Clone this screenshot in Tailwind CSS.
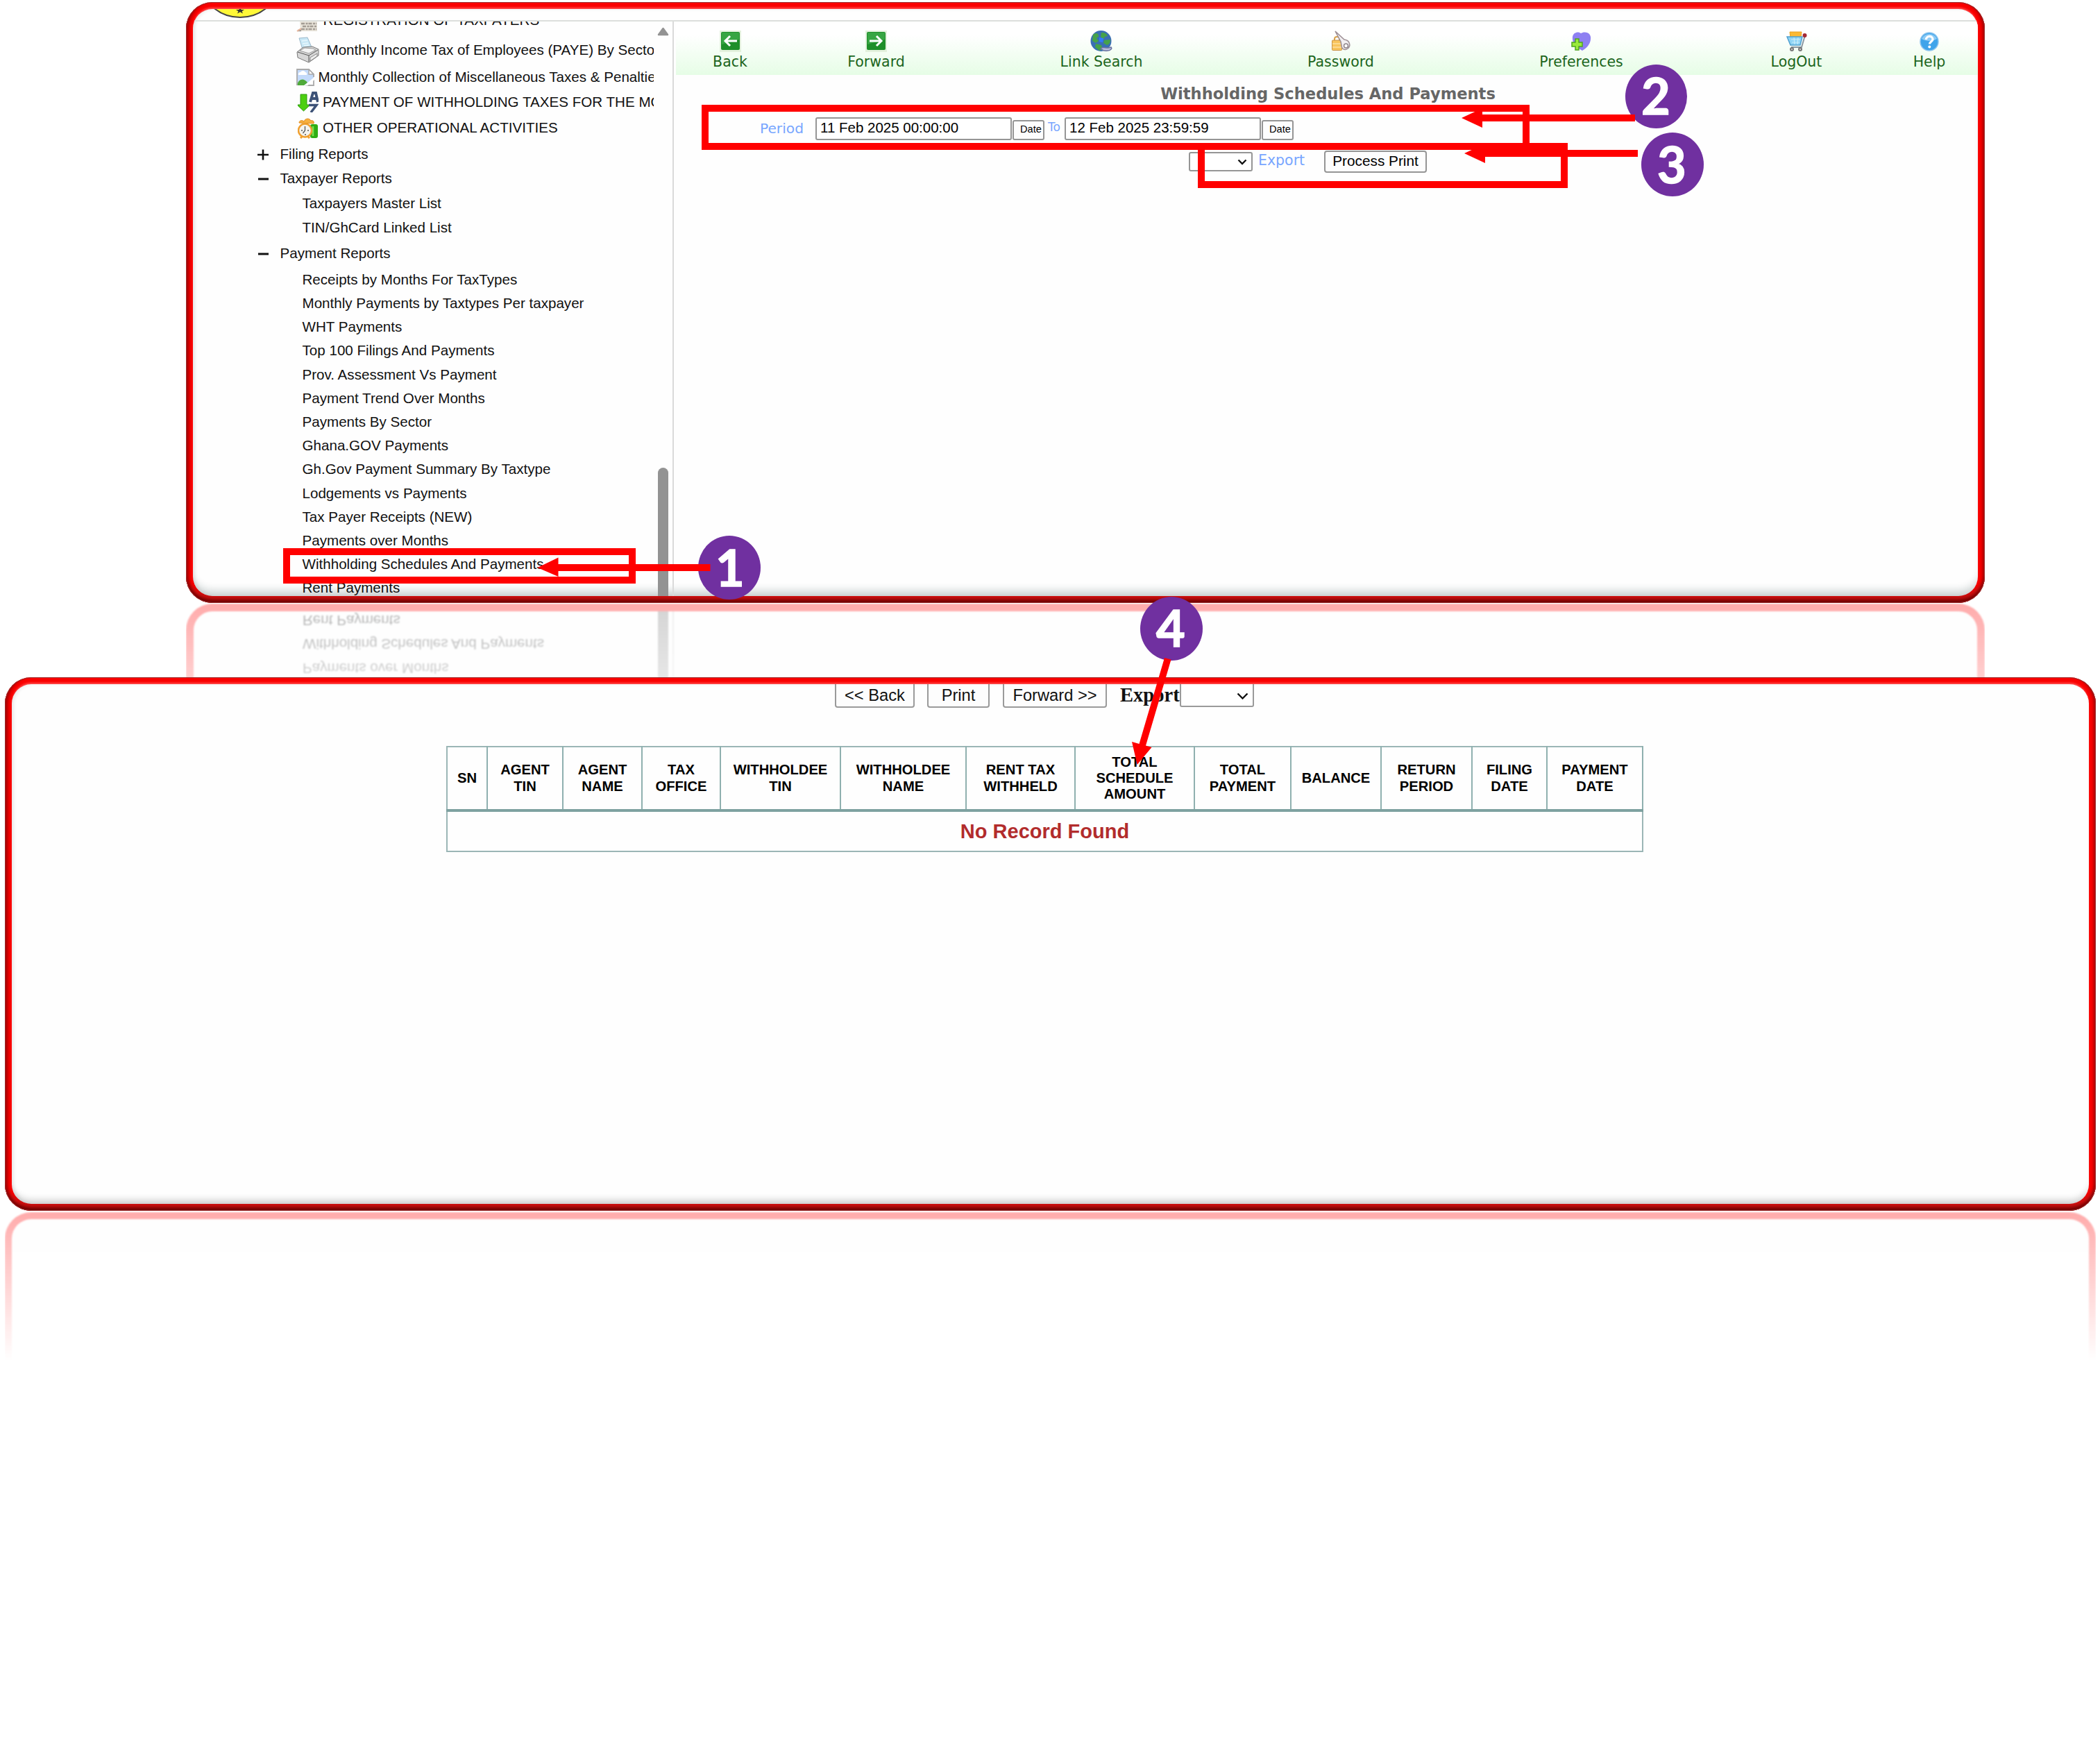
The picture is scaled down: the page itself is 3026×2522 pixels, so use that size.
<!DOCTYPE html>
<html lang="en">
<head>
<meta charset="utf-8">
<title>Withholding Schedules And Payments</title>
<script src="https://cdn.jsdelivr.net/npm/@tailwindcss/browser@4"></script>
</head>
<body class="bg-white">
<div class="relative flex h-[2522px] w-[3026px] flex-col overflow-hidden bg-white font-['Liberation_Sans',Arial,sans-serif] text-[20.6px] text-[#111]">

  <!-- Report selection panel -->
  <section class="mt-[3px] ml-[268px] h-[866px] w-[2592px] shrink-0 rounded-[38px] bg-[#fa0000] p-[10px] shadow-[inset_0_0_0_1px_#9a3030,inset_0_-9px_5px_-4px_#6d0000,inset_8px_0_4px_-4px_#a00000,inset_-7px_0_4px_-4px_#9c0000,inset_0_-18px_5px_-5px_#cc1010]">
    <div class="flex h-full flex-col overflow-hidden rounded-[28px] bg-[#fefefe] shadow-[0_-3px_3px_-1px_#ff5050,inset_0_-14px_12px_-6px_rgba(20,50,50,0.2),inset_3px_0_5px_rgba(0,0,0,0.08)]">
      <header class="flex h-[18px] shrink-0 items-start overflow-hidden border-b-2 border-[#dcdfdc]">
        <svg class="ml-[8px] h-[14px] w-[120px] shrink-0" viewBox="0 0 120 14"><circle cx="60" cy="-48" r="60" fill="#fff838" stroke="#444" stroke-width="2"/><path d="M60-3l1.6 4h4.4l-3.4 2.2L64 6.5 60 4.300l-4 2.200 1.400-3.300L54 1h4.400z" fill="#333"/></svg>
        <span class="-mt-[15px] ml-[2106px] w-[152px] text-[17px] leading-[20px] text-[#8a5a3a]">Date</span>
        <span class="-mt-[15px] text-[15px] leading-[20px] whitespace-nowrap text-[#8a5a3a]">05 Mar 2025 10:22:40</span>
      </header>
      <div class="flex min-h-0 flex-1">
        <aside class="flex w-[693px] shrink-0 overflow-hidden border-r-2 border-[#dadada]">
          <nav class="-mt-[20px] w-[664px] shrink-0 overflow-hidden whitespace-nowrap">
            <div class="flex h-[36px] items-center pl-[149px]">
              <span class="flex w-[38.600px] shrink-0"><svg class="h-[34px] w-[32px]" viewBox="0 0 32 34"><path d="M4 2h26v31H6z" fill="#e9e4da"/><path d="M7 22h22M9 26h20M7 30h22M2 32h5" stroke="#a39c94" stroke-width="2.500" stroke-dasharray="5 1.500 3 1"/><path d="M1 33l6-4" stroke="#e8b49a" stroke-width="2"/></svg></span>REGISTRATION OF TAXPAYERS
            </div>
            <div class="flex h-[50px] items-center pl-[149px]">
              <span class="flex w-[43.500px] shrink-0"><svg class="h-[38px] w-[33px]" viewBox="0 0 33 38"><path d="M4 2L16 1l6 14-13 3z" fill="#c9e8f6" stroke="#9bb9cc"/><path d="M8 6l8-1M9 10l8-1M11 13l7-1" stroke="#e6f6fc" stroke-width="1.500"/><path d="M1 22L10 15l13-1 9 4v9L18 37 2 30z" fill="#d7d7d7" stroke="#777"/><path d="M2 22l16 5 13-8M18 27v9" fill="none" stroke="#555"/><path d="M5 20l7-4 12 1 4 2-10 5z" fill="#f4f4f4" stroke="#999"/><path d="M20 30l10-6v4l-10 7z" fill="#eee" stroke="#888"/></svg></span>Monthly Income Tax of Employees (PAYE) By Sector
            </div>
            <div class="flex h-[29px] items-center pl-[149px]">
              <span class="flex w-[31.500px] shrink-0"><svg class="h-[25px] w-[26px]" viewBox="0 0 26 25"><path d="M1 1h17l7 7v7L15 24H1z" fill="#c3dafa"/><path d="M3 8a3 3 0 013-3 4 4 0 017 0 3 3 0 012 4H3z" fill="#fff"/><path d="M1 24c2-10 10-11 15-4l-5 4z" fill="#4faa3a"/><path d="M13 24h12v-9M1 24V1h17l7 7v4" fill="none" stroke="#aaa" stroke-width="1.800"/><path d="M18 1v7h7z" fill="#fff" stroke="#aaa" stroke-width="1.500"/><path d="M11 24.500L26 12v4L16 24.500z" fill="#fff"/></svg></span>Monthly Collection of Miscellaneous Taxes &amp; Penalties
            </div>
            <div class="flex h-[42px] items-center pl-[151px]">
              <span class="flex w-[36px] shrink-0"><svg class="h-[30px] w-[30px]" viewBox="0 0 30 30"><path d="M4 4h9v15h5L8.500 28-1 19h5z" fill="#4ccf10" stroke="#2f9a12"/><path d="M18 15L22 2h4l3 13M19.500 10h9" fill="none" stroke="#3d5277" stroke-width="4"/><path d="M16 19.500h11L19 30" fill="none" stroke="#3d5277" stroke-width="3.500"/></svg></span>PAYMENT OF WITHHOLDING TAXES FOR THE MONTH
            </div>
            <div class="flex h-[33px] items-center pl-[151px]">
              <span class="flex w-[36px] shrink-0"><svg class="h-[30px] w-[30px]" viewBox="0 0 30 30"><rect x="18" y="9" width="11" height="20" rx="3" fill="#2fae14"/><path d="M22 12v14" stroke="#7be04f" stroke-width="2.500"/><path d="M2 7c0-4 5-4 7-2 2-5 8-5 10-1 3-1 5 1 4 4z" fill="#f7b040" stroke="#e08a1a"/><circle cx="10.500" cy="18" r="9.500" fill="#f4f3ef" stroke="#f0a030" stroke-width="2.500"/><path d="M10.500 12v6l-3 4M5 18h2m7 0h2M10 24h2" stroke="#555" stroke-width="1.300" fill="none"/><path d="M4 29l3-3m10 3l-3-3" stroke="#f0a030" stroke-width="3"/></svg></span>OTHER OPERATIONAL ACTIVITIES
            </div>
            <div class="flex h-[43px] items-center pl-[92px]"><span class="flex w-[33.500px] shrink-0"><svg class="h-[18px] w-[18px]" viewBox="0 0 18 18"><path d="M1 9h16M9 1.500v15" stroke="#111" stroke-width="2.600"/></svg></span>Filing Reports</div>
            <div class="flex h-[26px] items-center pl-[94px]"><span class="flex w-[31.500px] shrink-0"><svg class="h-[18px] w-[16px]" viewBox="0 0 16 18"><path d="M0 10h15" stroke="#111" stroke-width="3"/></svg></span>Taxpayer Reports</div>
            <div class="flex h-[47px] items-center pl-[157.500px]">Taxpayers Master List</div>
            <div class="flex h-[22px] items-center pl-[157.500px]">TIN/GhCard Linked List</div>
            <div class="flex h-[52px] items-center pl-[94px]"><span class="flex w-[31.500px] shrink-0"><svg class="h-[18px] w-[16px]" viewBox="0 0 16 18"><path d="M0 10h15" stroke="#111" stroke-width="3"/></svg></span>Payment Reports</div>
            <div class="flex h-[24px] items-center pl-[157.500px]">Receipts by Months For TaxTypes</div>
            <ul class="mt-[5px] pl-[157.500px] leading-[34.200px]">
              <li class="h-[34.200px]">Monthly Payments by Taxtypes Per taxpayer</li>
              <li class="h-[34.200px]">WHT Payments</li>
              <li class="h-[34.200px]">Top 100 Filings And Payments</li>
              <li class="h-[34.200px]">Prov. Assessment Vs Payment</li>
              <li class="h-[34.200px]">Payment Trend Over Months</li>
              <li class="h-[34.200px]">Payments By Sector</li>
              <li class="h-[34.200px]">Ghana.GOV Payments</li>
              <li class="h-[34.200px]">Gh.Gov Payment Summary By Taxtype</li>
              <li class="h-[34.200px]">Lodgements vs Payments</li>
              <li class="h-[34.200px]">Tax Payer Receipts (NEW)</li>
              <li class="h-[34.200px]">Payments over Months</li>
              <li class="h-[34.200px]">Withholding Schedules And Payments</li>
              <li class="h-[34.200px]">Rent Payments</li>
            </ul>
          </nav>
          <!-- Scrollbar -->
          <div class="ml-[5px] flex w-[17px] flex-col pt-[8px]">
            <svg class="h-[13px] w-[17px]" viewBox="0 0 17 13"><path d="M8.500 2L15 11H2z" fill="#939393" stroke="#939393" stroke-width="2.500" stroke-linejoin="round"/></svg>
            <div class="mt-[622px] ml-px w-[15px] flex-1 rounded-t-[8px] bg-[#939393]"></div>
          </div>
        </aside>

        <main class="min-w-0 flex-1 overflow-hidden">
          <div class="ml-[3px] flex h-[77px] bg-linear-to-b from-white from-25% to-[#e6fde6] pt-[13px] font-['DejaVu_Sans',Verdana,sans-serif] text-[20.500px] leading-[24px] text-[#1c651c]">
            <div class="flex w-[156px] shrink-0 flex-col items-center gap-[2px]">
              <svg class="h-[31px] w-[31px]" viewBox="0 0 31 31"><rect width="31" height="31" fill="#e3f1dd"/><rect x="2" y="2" width="27" height="26" rx="2" fill="#1f8f2a"/><path d="M3 3h25v10L3 20z" fill="#37a543"/><path d="M25 15H8m7-7l-7 7 7 7" fill="none" stroke="#fff" stroke-width="3"/></svg>Back</div>
            <div class="flex w-[265px] shrink-0 flex-col items-center gap-[2px]">
              <svg class="h-[31px] w-[31px]" viewBox="0 0 31 31"><rect width="31" height="31" fill="#e3f1dd"/><rect x="2" y="2" width="27" height="26" rx="2" fill="#1f8f2a"/><path d="M3 3h25v10L3 20z" fill="#37a543"/><path d="M6 15h17m-7-7l7 7-7 7" fill="none" stroke="#fff" stroke-width="3"/></svg>Forward</div>
            <div class="flex w-[384px] shrink-0 flex-col items-center gap-[2px]">
              <svg class="h-[31px] w-[32px]" viewBox="0 0 32 31"><circle cx="15.500" cy="15" r="15" fill="#3a6fb4"/><path d="M4 6c5-4 9-1 8 3l-3 2 3 4-4 3-5-3zM16 3c6 0 8 2 9 5l-4 1-2 4-4-4zM20 14l9-1c0 5-2 7-5 8l-5-3zM8 19l8 2 2 6-5 2-6-5z" fill="#46a24a"/><path d="M13 10l6 1-1 6-5-1z" fill="#2f7bff"/><path d="M15 26c4-4 8 1 15-2 2 2-1 5-5 5-5 1-8-1-10-3z" fill="#b8bede" stroke="#69729f" stroke-width="1.500"/></svg>Link Search</div>
            <div class="flex w-[306px] shrink-0 flex-col items-center gap-[2px]">
              <svg class="h-[31px] w-[30px]" viewBox="0 0 30 31"><path d="M6 15v-3c0-4 7-4 7 0v3" fill="none" stroke="#d9a24c" stroke-width="2"/><rect x="2.500" y="14" width="14" height="14.500" rx="1" fill="#f9c45c" stroke="#c9924a"/><path d="M3 19h13M3 24h13" stroke="#fde0a0" stroke-width="1.500"/><path d="M7 1l13 12c8 1 10 9 5 13-4 3-9 1-9-5l-1-5z" fill="#f2eff1" stroke="#9d8f95" stroke-width="1.500"/><circle cx="22.500" cy="22" r="3" fill="#fff" stroke="#8f858c" stroke-width="1.500"/></svg>Password</div>
            <div class="flex w-[387px] shrink-0 flex-col items-center gap-[2px]">
              <svg class="h-[31px] w-[30px]" viewBox="0 0 30 31"><path d="M16 29C6 23 1 17 2 9c1-7 9-8 12-5 4-3 13-2 14 5 1 9-5 16-12 20z" fill="#8e80f2"/><path d="M6 12h5v5h5v6h-5v5H6v-5H1v-6h5z" fill="#9bea3a" stroke="#4ea41f" stroke-width="1.500"/></svg>Preferences</div>
            <div class="flex w-[233px] shrink-0 flex-col items-center gap-[2px]">
              <svg class="h-[31px] w-[30px]" viewBox="0 0 30 31"><path d="M5 2h17l-1 9H6z" fill="#fbb934" stroke="#e8a020"/><path d="M1 9h22l-3 12H6z" fill="#8fd4f6" stroke="#4f9fce" stroke-width="1.500"/><path d="M7 13h13M8 17h11M11 10l1 10m5-10l-1 10" stroke="#c8ecfb" stroke-width="1.200"/><path d="M27 7l-5 17H7" fill="none" stroke="#8a97a0" stroke-width="2"/><circle cx="26.500" cy="7" r="3" fill="#a52a35"/><circle cx="8" cy="27" r="3" fill="#777"/><circle cx="20" cy="27" r="3" fill="#777"/><circle cx="8" cy="27" r="1" fill="#ddd"/><circle cx="20" cy="27" r="1" fill="#ddd"/></svg>LogOut</div>
            <div class="flex w-[150px] shrink-0 flex-col items-center gap-[2px]">
              <svg class="h-[31px] w-[30px]" viewBox="0 0 30 31"><circle cx="15" cy="16" r="13" fill="#3fa4ea" stroke="#8cc4ee" stroke-width="1.500"/><path d="M4 12a11.500 10 0 0122 0c-6 4-16 4-22 0z" fill="#8ccbf5"/><path d="M10.500 13c0-6 9.500-6 9.500-.5 0 3.500-4.500 3.500-4.500 7" fill="none" stroke="#fff" stroke-width="3.200"/><circle cx="15.300" cy="23.500" r="2" fill="#fff"/></svg>Help</div>
          </div>

          <h1 class="mt-[7px] h-[40px] pl-[6px] text-center font-['DejaVu_Sans',Verdana,sans-serif] text-[22.600px] leading-[40px] font-bold text-[#666]">Withholding Schedules And Payments</h1>

          <form class="font-['DejaVu_Sans',Verdana,sans-serif] text-[20.200px] text-[#78a6ff]">
            <div class="mt-[13px] flex h-[34px] items-center pl-[124px]">
              <label class="w-[80px]">Period</label>
              <input class="h-[33px] w-[283px] rounded-[3px] border-2 border-[#959595] bg-white pb-[2px] pl-[5px] font-['Liberation_Sans',Arial,sans-serif] text-[20.500px] text-black" value="11 Feb 2025 00:00:00" readonly>
              <button type="button" class="mt-[4px] ml-px h-[29px] w-[46px] rounded-[3px] border-2 border-[#959595] bg-[#fdfdfd] pl-[7px] font-['Liberation_Sans',Arial,sans-serif] text-[14.600px] text-black">Date</button>
              <span class="-mt-[3px] w-[29px] pl-[5px] text-[17px]">To</span>
              <input class="h-[33px] w-[283px] rounded-[3px] border-2 border-[#959595] bg-white pb-[2px] pl-[5px] font-['Liberation_Sans',Arial,sans-serif] text-[20.500px] text-black" value="12 Feb 2025 23:59:59" readonly>
              <button type="button" class="mt-[4px] ml-px h-[29px] w-[46px] rounded-[3px] border-2 border-[#959595] bg-[#fdfdfd] pl-[7px] font-['Liberation_Sans',Arial,sans-serif] text-[14.600px] text-black">Date</button>
            </div>
            <div class="mt-[15px] flex h-[32px] items-center pl-[742px]">
              <div class="flex h-[28px] w-[92px] items-center justify-end rounded-[3px] border-2 border-[#959595] bg-white pr-[6px]"><svg class="h-[9px] w-[14px]" viewBox="0 0 14 9"><path d="M1.500 1.500L7 7l5.500-5.500" fill="none" stroke="#111" stroke-width="2.400"/></svg></div>
              <label class="-mt-[3px] w-[103px] pl-[8px] text-[20.500px]">Export</label>
              <button type="button" class="h-[32px] w-[148px] rounded-[4px] border-2 border-[#959595] bg-[#fdfdfd] pb-[2px] font-['Liberation_Sans',Arial,sans-serif] text-[20.800px] leading-[26px] whitespace-nowrap text-black">Process Print</button>
            </div>
          </form>
        </main>
      </div>
    </div>
  </section>

  <!-- Mirror image below the first panel -->
  <div aria-hidden="true" class="mt-px ml-[268px] h-[106px] w-[2592px] shrink-0 overflow-hidden [mask-image:linear-gradient(to_bottom,rgb(0_0_0/0.34),transparent_250px)]">
    <div class="flex h-[106px] -scale-y-100 flex-col justify-end blur-[1px]">
      <div class="flex h-[200px] shrink-0 rounded-b-[38px] border-x-[11px] border-b-[11px] border-[#ff0808] bg-[#fbfcfc]">
        <div class="flex w-[669px] flex-col justify-end">
          <ul class="-mb-[4px] pl-[157px] leading-[34.200px] text-[#111]">
            <li class="h-[34.200px]">Payments over Months</li>
            <li class="h-[34.200px]">Withholding Schedules And Payments</li>
            <li class="h-[34.200px]">Rent Payments</li>
          </ul>
        </div>
        <div class="w-[15px] bg-[#808080]"></div>
        <div class="ml-[6px] w-[2px] bg-[#ccc]"></div>
      </div>
    </div>
  </div>

  <!-- Report result panel -->
  <section class="ml-[7px] h-[769px] w-[3013px] shrink-0 rounded-[38px] bg-[#fa0000] p-[10px] shadow-[inset_0_0_0_1px_#9a3030,inset_0_-9px_5px_-4px_#6d0000,inset_8px_0_4px_-4px_#a00000,inset_-7px_0_4px_-4px_#9c0000,inset_0_-18px_5px_-5px_#cc1010]">
    <div class="h-full overflow-hidden rounded-[28px] bg-[#fefefe] shadow-[0_-3px_3px_-1px_#ff5050,inset_0_-12px_10px_-6px_rgba(0,0,0,0.17),inset_3px_0_5px_rgba(0,0,0,0.08)]">
      <div class="flex h-[34px] items-end pl-[1186px] text-[23.700px]">
        <button type="button" class="h-[40px] w-[115px] shrink-0 rounded-[4px] border-2 border-[#9a9a9a] bg-[#fdfdfd] pt-[3px] whitespace-nowrap">&lt;&lt; Back</button>
        <button type="button" class="ml-[18px] h-[40px] w-[90px] shrink-0 rounded-[4px] border-2 border-[#9a9a9a] bg-[#fdfdfd] pt-[3px]">Print</button>
        <button type="button" class="ml-[19px] h-[40px] w-[150px] shrink-0 rounded-[4px] border-2 border-[#9a9a9a] bg-[#fdfdfd] pt-[3px] whitespace-nowrap">Forward &gt;&gt;</button>
        <span class="ml-[19px] w-[86px] font-['Liberation_Serif','Times_New_Roman',serif] text-[28.600px] leading-[36px] font-bold">Export</span>
        <div class="mb-[1px] flex h-[36px] w-[107px] items-center justify-end rounded-[3px] border-2 border-[#9a9a9a] bg-white pt-[4px] pr-[6px]"><svg class="h-[10px] w-[17px]" viewBox="0 0 17 10"><path d="M1.500 1.500l7 7 7-7" fill="none" stroke="#111" stroke-width="2.400"/></svg></div>
      </div>
      <table class="mt-[55px] ml-[626px] w-[1723px] table-fixed border-collapse border-2 border-[#9bb6b6] text-center">
        <colgroup><col class="w-[58px]"><col class="w-[109px]"><col class="w-[114px]"><col class="w-[113px]"><col class="w-[173px]"><col class="w-[181px]"><col class="w-[157px]"><col class="w-[172px]"><col class="w-[139px]"><col class="w-[130px]"><col class="w-[131px]"><col class="w-[108px]"><col class="w-[138px]"></colgroup>
        <thead>
          <tr class="h-[92px] border-b-4 border-[#7ea1a0] text-[20.200px] leading-[23.200px] text-black [&>th]:border-r-2 [&>th]:border-r-[#8fb0af] [&>th]:p-0 [&>th]:font-bold">
            <th>SN</th><th>AGENT<br>TIN</th><th>AGENT<br>NAME</th><th>TAX<br>OFFICE</th><th>WITHHOLDEE<br>TIN</th><th>WITHHOLDEE<br>NAME</th><th>RENT TAX<br>WITHHELD</th><th>TOTAL<br>SCHEDULE<br>AMOUNT</th><th>TOTAL<br>PAYMENT</th><th>BALANCE</th><th>RETURN<br>PERIOD</th><th>FILING<br>DATE</th><th>PAYMENT<br>DATE</th>
          </tr>
        </thead>
        <tbody><tr class="h-[59px]"><td colspan="13" class="p-0 pb-px text-[29px] leading-[32px] font-bold text-[#b22c2c]">No Record Found</td></tr></tbody>
      </table>
    </div>
  </section>

  <!-- Mirror image below the second panel -->
  <div aria-hidden="true" class="mt-px ml-[7px] h-[215px] w-[3013px] shrink-0 overflow-hidden [mask-image:linear-gradient(to_bottom,rgb(0_0_0/0.34),transparent)]">
    <div class="mt-px h-[260px] rounded-t-[38px] border-x-[10px] border-t-[10px] border-[#ff0808] bg-[#fdfdfd] blur-[1px]"></div>
  </div>

  <!-- Step callouts -->
  <svg class="absolute inset-0 h-[1200px] w-[3026px]" viewBox="0 0 3026 1200">
    <g fill="none" stroke="#f00" stroke-width="10">
      <rect x="413" y="795" width="498" height="41"/>
      <rect x="1016" y="156" width="1183" height="55"/>
      <rect x="1731" y="211" width="523" height="55"/>
    </g>
    <g fill="#7030a0">
      <ellipse cx="1051" cy="818" rx="45" ry="46"/>
      <ellipse cx="2386.500" cy="139" rx="44.500" ry="46"/>
      <ellipse cx="2410" cy="237" rx="45" ry="46"/>
      <ellipse cx="1688" cy="906" rx="45" ry="46"/>
    </g>
    <g fill="#fff" stroke="#fff" stroke-width="1.500" font-family="Lato, sans-serif" font-size="72" font-weight="700" text-anchor="middle">
      <text x="1052" y="845">1</text>
      <text x="2386" y="165">2</text>
      <text x="2409" y="264">3</text>
      <text x="1687" y="932">4</text>
    </g>
    <g fill="#f00">
      <path d="M774.500 818l30-14.500v9.500h219v10h-219v8z"/>
      <path d="M2106 170l30-14v9h220v10h-220v9z"/>
      <path d="M2110 221l30-14v9h220v10h-220v9z"/>
      <path d="M1638.600 1102l-7.600-33 10.500 3L1678 948l9.500 2.500-36.500 124 8.500 2.500z"/>
    </g>
  </svg>
</div>
</body>
</html>
